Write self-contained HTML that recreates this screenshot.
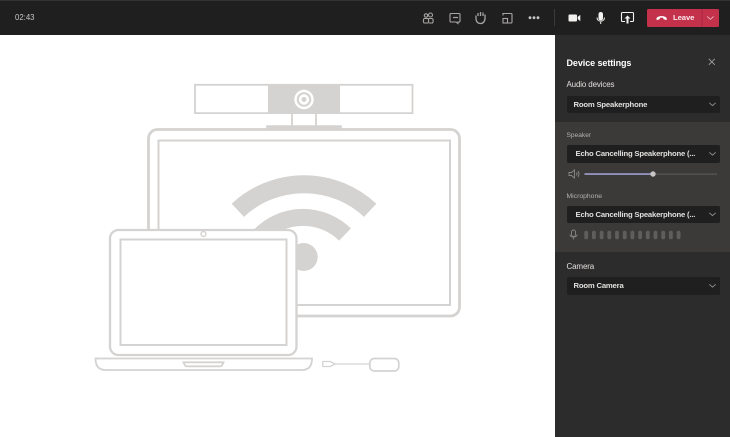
<!DOCTYPE html>
<html><head><meta charset="utf-8">
<style>
html,body{margin:0;padding:0;background:#fff}
#r{position:relative;width:730px;height:437px;overflow:hidden;font-family:"Liberation Sans",sans-serif;background:#fff;filter:blur(.3px)}
.a{position:absolute}
.t{position:absolute;white-space:nowrap;line-height:12px}
.sel{position:absolute;left:566.500px;width:153.500px;height:17.500px;background:#1f1f1f;border-radius:2px}
.b{font-size:7.700px;font-weight:bold;letter-spacing:-.19px;color:#e1dfdd}
</style></head><body><div id="r">
<div class="a" style="left:0;top:0;width:730px;height:35px;background:#1f1f1f"></div>
<div class="a" style="left:0;top:0;width:730px;height:1px;background:#333"></div>
<div class="a" style="left:555px;top:35px;width:175px;height:402px;background:#2d2c2c"></div>
<div class="a" style="left:555px;top:122px;width:175px;height:130px;background:#3b3a39"></div>
<div class="t" style="left:15px;top:12px;font-size:7.800px;color:#c8c6c4">02:43</div>

<svg class="a" style="left:0;top:0" width="730" height="35" viewBox="0 0 730 35" fill="none">
<g stroke="#a8a6a4" stroke-width="1.100">
<circle cx="426" cy="15.500" r="1.700"/><circle cx="430.500" cy="15" r="2"/>
<path d="M424 23c-1-1-.8-4.500.5-4.500h3c1.300 0 1.500 3.500.5 4.500z"/><path d="M428.500 18.500h3.500c1.400 0 1.500 3.500.5 4.500h-3.500"/>
<path d="M451 13.500h8a1 1 0 0 1 1 1v6.500a1 1 0 0 1-1 1h-1v1.500l-2-1.500h-5a1 1 0 0 1-1-1v-6.500a1 1 0 0 1 1-1z"/>
<path d="M453 17.500h5" stroke-width="1.200"/>
<path d="M477.500 22.500c-1-1-1.500-3-1.500-4.500v-2.500M478 16v-3M480.500 16v-4M483 16v-3.500M485 18v-3.500M485 17.500c.2 3.500-1.500 6-4.500 6-1.300 0-2.200-.4-3-1" stroke-width="1.300"/>
<path d="M503 15.500v-2h8a1 1 0 0 1 1 1v7.500a1 1 0 0 1-1 1h-3"/>
<rect x="503" y="18.500" width="4.500" height="4.500"/>
</g>
<g fill="#c8c6c4"><circle cx="530" cy="17.700" r="1.400"/><circle cx="534" cy="17.700" r="1.400"/><circle cx="538" cy="17.700" r="1.400"/></g>
<rect x="554" y="9" width="1" height="17" fill="#3b3a39"/>
<g fill="#f3f2f1">
<rect x="568.500" y="14.500" width="8.500" height="7" rx="1"/>
<path d="M578 17l2-1.500v5l-2-1.500z" stroke="#f3f2f1" stroke-width=".6"/>
<rect x="598.500" y="12" width="4.500" height="8.500" rx="2.200"/>
</g>
<path d="M597 17.500c0 5 7.500 5 7.500 0M600.700 22v2" stroke="#f3f2f1" stroke-width="1"/>
<path d="M625 21.500h-2.500a1 1 0 0 1-1-1v-7a1 1 0 0 1 1-1h10a1 1 0 0 1 1 1v7a1 1 0 0 1-1 1H630" stroke="#f3f2f1" stroke-width="1.100"/>
<path d="M627.500 15.500l3 3h-2v5h-2v-5h-2z" fill="#f3f2f1"/>
<rect x="647" y="9" width="72" height="18" rx="1.500" fill="#c4314b"/>
<rect x="701.500" y="9" width="1" height="18" fill="#a72840"/>
<path d="M656.500 18.800c.2-3.400 10-3.400 10.200 0l-.4 1.200-2.800-1v-1.200c-1.200-.4-2.600-.4-3.800 0v1.200l-2.800 1z" fill="#fff" stroke="#fff" stroke-width=".3"/>
<path d="M707.200 16.500l3.200 2.800 3.200-2.800" stroke="#e3b5bf" stroke-width=".9"/>
</svg>
<div class="t" style="left:673px;top:11.500px;font-size:7.700px;font-weight:bold;letter-spacing:-.1px;color:#fbe9ec">Leave</div>

<svg class="a" style="left:0;top:35px" width="555" height="402" viewBox="0 35 555 402" fill="none">
<g stroke="#d5d3d1">
<path d="M237.800 210.300A97 97 0 0 1 370.200 210.300" stroke-width="18"/>
<path d="M260 235.500A60 60 0 0 1 345 234.500" stroke-width="17"/>
<circle cx="303.700" cy="257" r="14" fill="#d5d3d1" stroke="none"/>
<rect x="148.500" y="129.500" width="311" height="186.500" rx="9" stroke-width="2.800"/>
<rect x="158.500" y="140.500" width="291.500" height="164.500" stroke-width="2"/>
<path d="M195 84.800h217.500v28.300H195z" stroke-width="1.800"/>
<rect x="268" y="85" width="72" height="28" fill="#d5d3d1" stroke="none"/>
<circle cx="304" cy="99.500" r="8.500" stroke="#fff" stroke-width="2.400"/>
<circle cx="304" cy="99.500" r="5.200" fill="#fff" stroke="none"/>
<circle cx="304" cy="99.500" r="2.500" fill="#d5d3d1" stroke="none"/>
<path d="M292 113v13M316 113v13" stroke-width="1.800"/>
<path d="M267 128.500v-2.500h74v2.500" stroke-width="1.500" fill="#d5d3d1"/>
<rect x="109" y="229" width="188.500" height="126" rx="9" fill="#fff" stroke="none"/>
<rect x="110" y="230" width="186.500" height="125" rx="8.500" stroke-width="2.300"/>
<rect x="120.500" y="239.500" width="166" height="105.500" stroke-width="2"/>
<circle cx="203.500" cy="234" r="2.500" stroke-width="1.400"/>
<path d="M95.500 358.500h216.500c0 6-2 11.500-10 11.500H105.500c-8 0-10-5.500-10-11.500z" stroke-width="1.800"/>
<path d="M183.500 362.300h40l-1.500 3c-.3.700-1 1-2 1h-33c-1 0-1.700-.3-2-1z" stroke-width="1.800"/>
<path d="M322.800 361.500h7.500l5 2.500-5 2.500h-7.500zM335 364h34" stroke-width="1.300"/>
<rect x="369.800" y="358.500" width="29" height="12.500" rx="4.500" stroke-width="1.700"/>
</g>
</svg>

<div class="t" style="left:566.500px;top:56.500px;font-size:9px;font-weight:bold;letter-spacing:-.08px;color:#fff">Device settings</div>
<svg class="a" style="left:707.500px;top:58px" width="8" height="8" viewBox="0 0 8 8"><path d="M.8.800l6 6M6.800.800l-6 6" stroke="#a8a6a4" stroke-width=".8" fill="none"/></svg>
<div class="t" style="left:566.500px;top:79px;font-size:8px;letter-spacing:-.15px;color:#e1dfdd">Audio devices</div>
<div class="sel" style="top:95.500px"></div>
<div class="t b" style="left:573.500px;top:98.500px">Room Speakerphone</div>
<div class="t" style="left:566.500px;top:129.500px;font-size:6.600px;color:#b3b0ad">Speaker</div>
<div class="sel" style="top:145px"></div>
<div class="t b" style="left:575.500px;top:148.300px">Echo Cancelling Speakerphone (...</div>
<div class="t" style="left:566.500px;top:190.500px;font-size:6.800px;color:#b3b0ad">Microphone</div>
<div class="sel" style="top:205.500px"></div>
<div class="t b" style="left:575.500px;top:208.800px">Echo Cancelling Speakerphone (...</div>
<div class="t" style="left:566.500px;top:261px;font-size:8px;letter-spacing:-.15px;color:#e1dfdd">Camera</div>
<div class="sel" style="top:277px"></div>
<div class="t b" style="left:573.500px;top:280px">Room Camera</div>

<svg class="a" style="left:555px;top:35px" width="175" height="402" viewBox="555 35 175 402" fill="none">
<g stroke="#8f8d8b" stroke-width=".9">
<path d="M709.300 102.800l3.200 2.800 3.200-2.800M709.300 152.300l3.200 2.800 3.200-2.800M709.300 212.800l3.200 2.800 3.200-2.800M709.300 284.300l3.200 2.800 3.200-2.800"/>
<path d="M569 172.500h2.500l3-2.500v8l-3-2.500H569zM576.500 172.500c.7 1 .7 2 0 3M578 171c1.300 2 1.300 4 0 6" stroke="#8a8886"/>
<rect x="571.500" y="230" width="4" height="6.500" rx="2" stroke="#8a8886"/>
<path d="M570 234.500c0 3.500 7 3.500 7 0M573.500 238v1.500" stroke="#8a8886"/>
</g>
<rect x="584.500" y="173.300" width="68.500" height="1.500" fill="#a6a7dc"/>
<rect x="653" y="173.600" width="64" height="1" fill="#605e5c"/>
<circle cx="653" cy="174" r="2.700" fill="#c8c6c4"/>
<g fill="#605e5c">
<rect x="584.300" y="230.700" width="3.800" height="8.600" rx="1.800"/><rect x="592" y="230.700" width="3.800" height="8.600" rx="1.800"/><rect x="599.700" y="230.700" width="3.800" height="8.600" rx="1.800"/><rect x="607.400" y="230.700" width="3.800" height="8.600" rx="1.800"/><rect x="615.100" y="230.700" width="3.800" height="8.600" rx="1.800"/><rect x="622.800" y="230.700" width="3.800" height="8.600" rx="1.800"/><rect x="630.500" y="230.700" width="3.800" height="8.600" rx="1.800"/><rect x="638.200" y="230.700" width="3.800" height="8.600" rx="1.800"/><rect x="645.900" y="230.700" width="3.800" height="8.600" rx="1.800"/><rect x="653.600" y="230.700" width="3.800" height="8.600" rx="1.800"/><rect x="661.300" y="230.700" width="3.800" height="8.600" rx="1.800"/><rect x="669" y="230.700" width="3.800" height="8.600" rx="1.800"/><rect x="676.700" y="230.700" width="3.800" height="8.600" rx="1.800"/>
</g>
</svg>
</div></body></html>
